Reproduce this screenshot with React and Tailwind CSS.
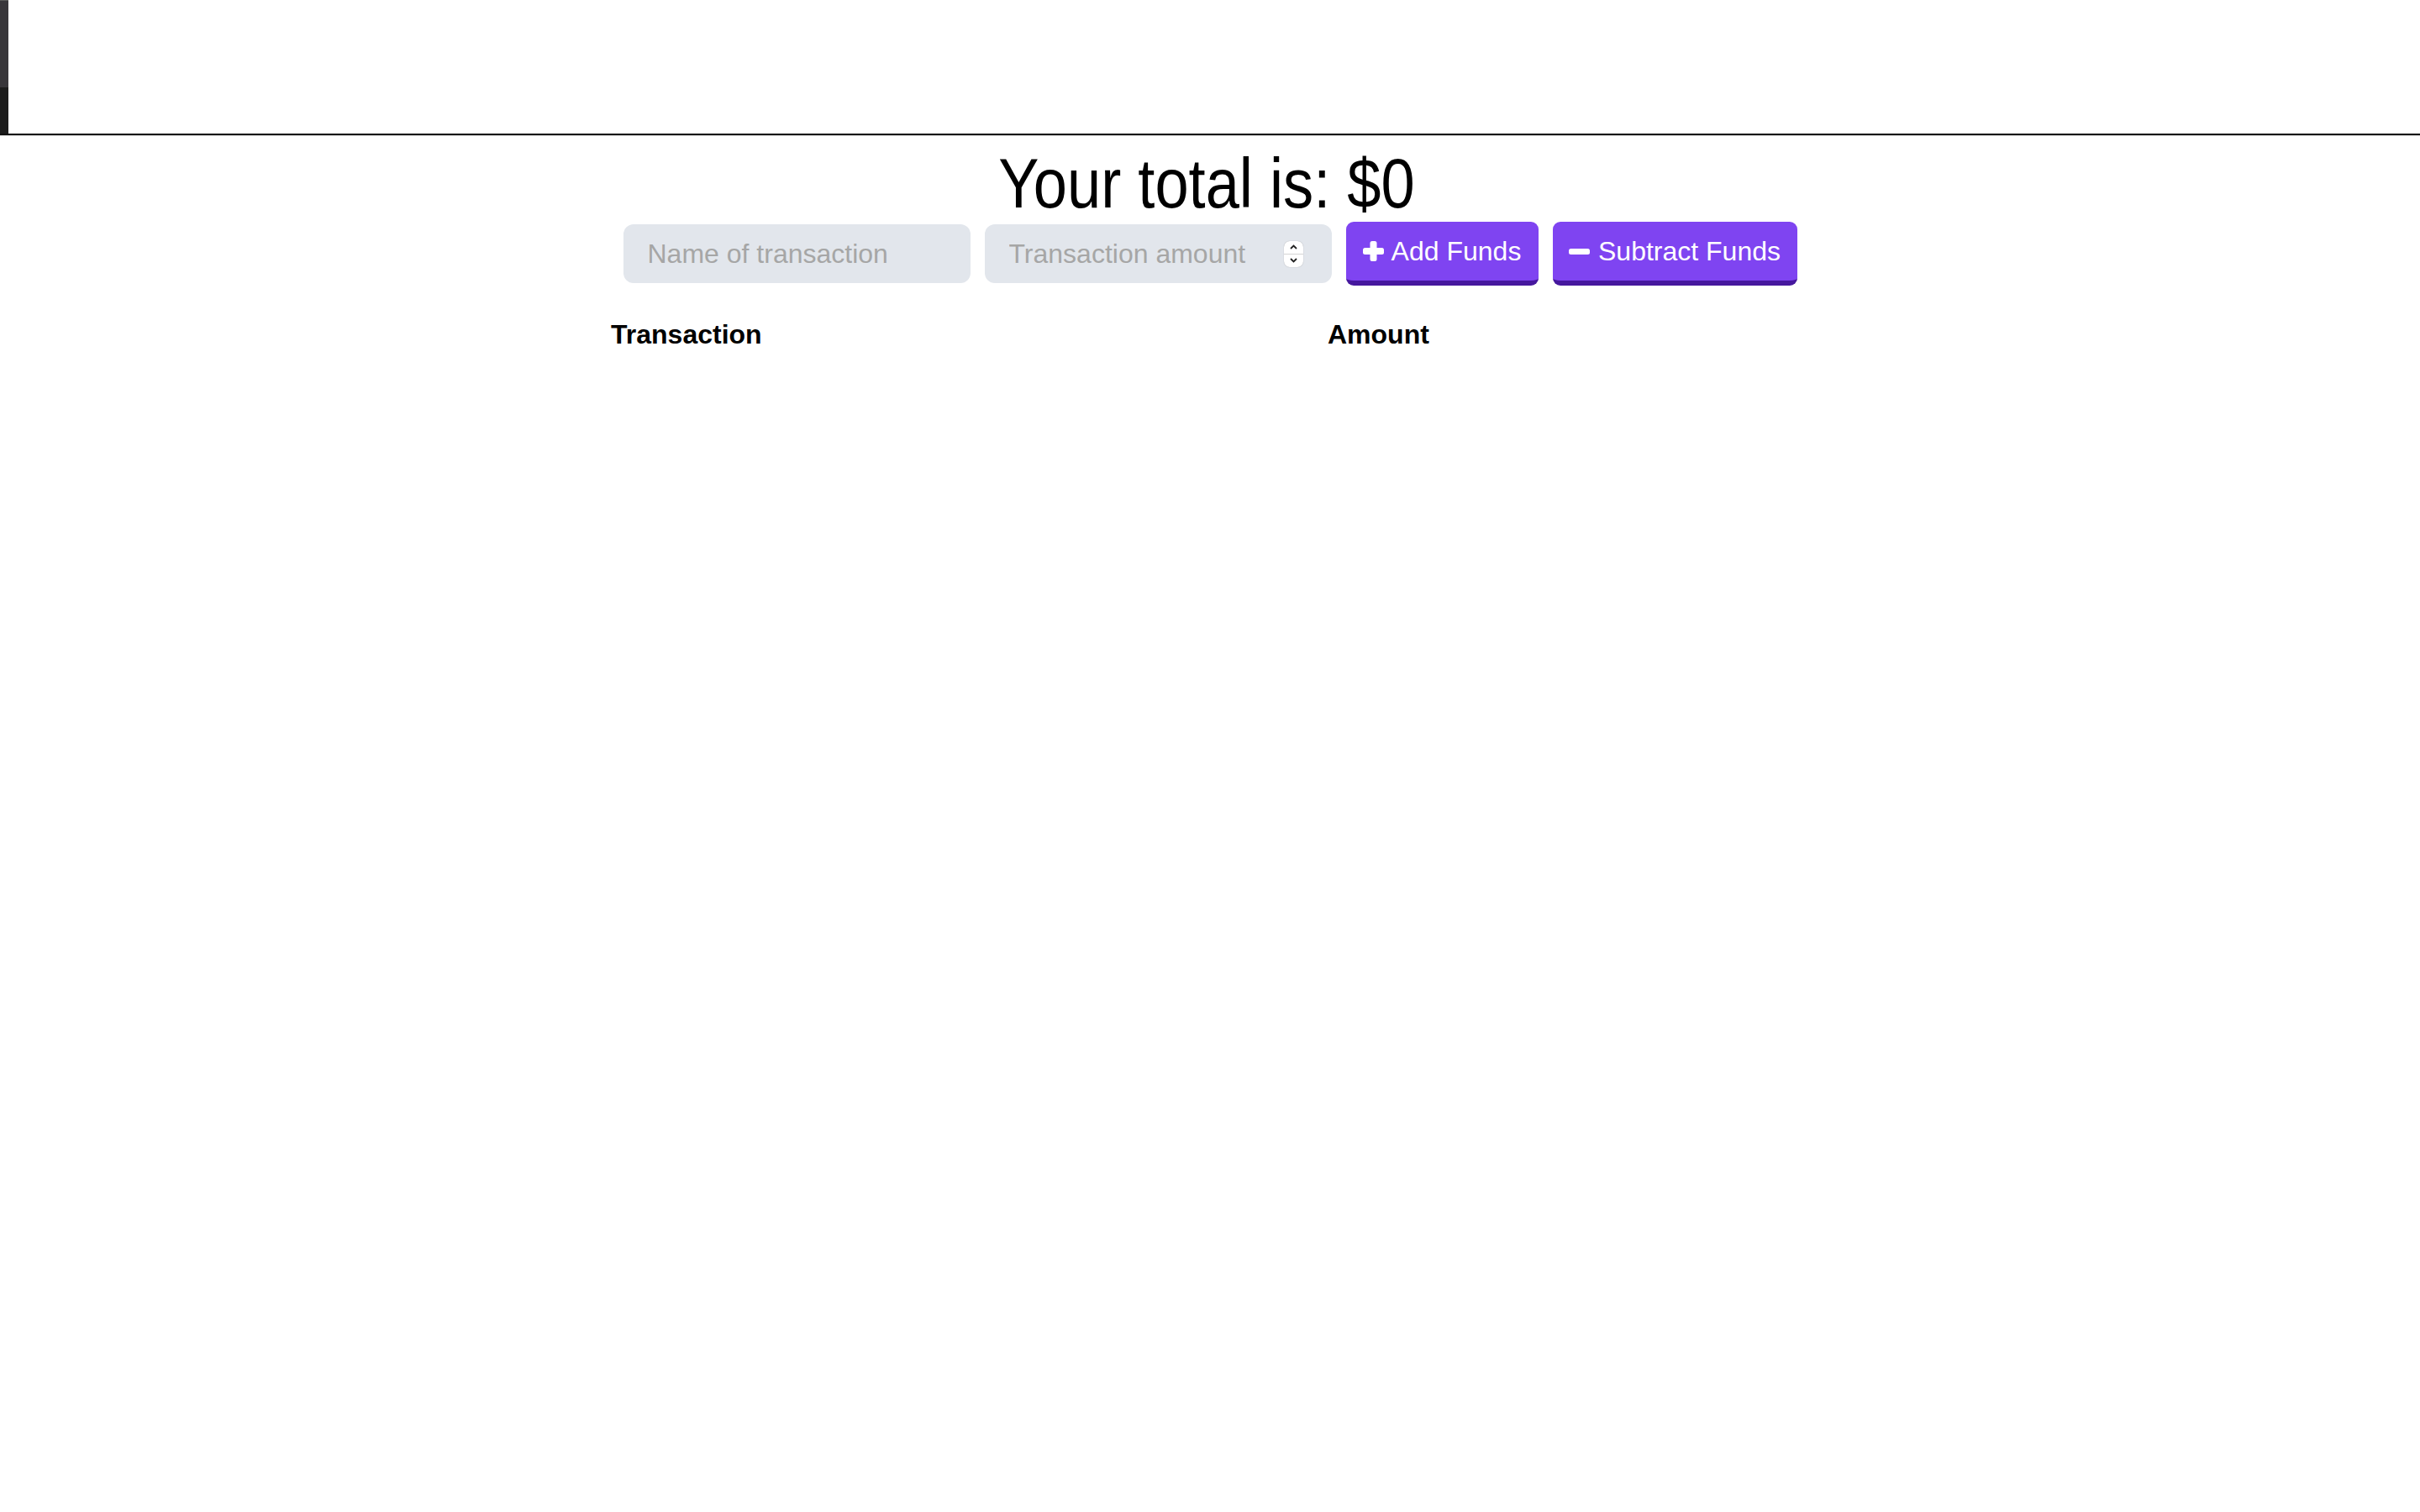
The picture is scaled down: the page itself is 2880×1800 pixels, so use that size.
import { useState } from "react";

// plus / minus glyphs as drawn in the buttons
function PlusIcon() {
    return (
        <svg width="25" height="24" viewBox="0 0 25 24" fill="white">
            <rect x="0" y="8" width="25" height="8" rx="2.5" />
            <rect x="8.5" y="0" width="8" height="24" rx="2.5" />
        </svg>
    );
}

function MinusIcon() {
    return (
        <svg width="25" height="7" viewBox="0 0 25 7" fill="white">
            <rect x="0" y="0" width="25" height="7" rx="2.5" />
        </svg>
    );
}

function Spinner() {
    return (
        <div className="w-[23px] h-[31px] bg-white rounded-[7px] shadow-[0_0_1px_rgba(0,0,0,0.35)] flex flex-col shrink-0">
            <div className="flex-1 flex items-center justify-center border-b border-[#d4d4d4]">
                <svg width="9" height="6" viewBox="0 0 9 6" fill="none" stroke="#222" strokeWidth="1.8">
                    <path d="M1 5 L4.5 1.5 L8 5" />
                </svg>
            </div>
            <div className="flex-1 flex items-center justify-center">
                <svg width="9" height="6" viewBox="0 0 9 6" fill="none" stroke="#222" strokeWidth="1.8">
                    <path d="M1 1 L4.5 4.5 L8 1" />
                </svg>
            </div>
        </div>
    );
}

export default function App() {
    const [name, setName] = useState("");
    const [amount, setAmount] = useState("");
    const [transactions, setTransactions] = useState([]);

    const total = transactions.reduce((sum, t) => sum + t.amount, 0);

    const addTx = (sign) => {
        const value = parseFloat(amount);
        if (!name || isNaN(value)) return;
        setTransactions([...transactions, { name, amount: sign * value }]);
        setName("");
        setAmount("");
    };

    return (
        <div className="min-h-screen bg-white text-black font-['Liberation_Sans',Arial,sans-serif]">
            {/* ── Top strip ── */}
            <div className="h-[161px] flex border-b-2 border-[#111]">
                <div className="w-[10px] flex flex-col">
                    <div className="h-[104px] bg-[#38363a] border-t border-[#5a5a5a]" />
                    <div className="flex-1 bg-[#1c1c1c]" />
                </div>
            </div>
            <div className="h-px bg-[#d6d6d6]" />

            {/* ── Total ── condensed title face */}
            <h1 className="mt-[13px] text-center text-[84px] leading-[86px]">
                <span className="inline-block scale-x-[0.86] translate-x-[-4px]">
                    Your total is: ${total}
                </span>
            </h1>

            {/* ── Form row ── */}
            <div className="mt-[3px] flex items-center justify-center gap-[17px]">
                <input
                    type="text"
                    value={name}
                    onChange={(e) => setName(e.target.value)}
                    placeholder="Name of transaction"
                    className="w-[413px] h-[70px] rounded-[12px] bg-[#e2e6ec] pl-[29px] text-[32px] outline-none placeholder:text-[#a6a6a6]"
                />
                <div className="w-[413px] h-[70px] rounded-[12px] bg-[#e2e6ec] flex items-center pl-[29px] pr-[34px]">
                    <input
                        type="text"
                        value={amount}
                        onChange={(e) => setAmount(e.target.value)}
                        placeholder="Transaction amount"
                        className="flex-1 min-w-0 bg-transparent text-[32px] outline-none placeholder:text-[#a6a6a6]"
                    />
                    <Spinner />
                </div>
                <button
                    onClick={() => addTx(1)}
                    className="w-[229px] h-[76px] rounded-[9px] bg-[#7f44f1] border-b-[6px] border-[#46189e] text-white text-[32px] flex items-center justify-center gap-[9px]"
                >
                    <PlusIcon />
                    <span>Add Funds</span>
                </button>
                <button
                    onClick={() => addTx(-1)}
                    className="w-[291px] h-[76px] rounded-[9px] bg-[#7f44f1] border-b-[6px] border-[#46189e] text-white text-[32px] flex items-center justify-center gap-[10px]"
                >
                    <MinusIcon />
                    <span>Subtract Funds</span>
                </button>
            </div>

            {/* ── Transactions table ── */}
            <div className="mt-[32px] mx-auto w-[1440px]">
                <div className="grid grid-cols-[852px_588px] text-[32px] font-bold leading-[37px]">
                    <div className="py-[8px] pl-[7px]">Transaction</div>
                    <div className="py-[8px] pl-[8px]">Amount</div>
                </div>
                {transactions.map((t, i) => (
                    <div key={i} className="grid grid-cols-[852px_588px] text-[32px] leading-[37px]">
                        <div className="py-[8px] pl-[7px]">{t.name}</div>
                        <div className="py-[8px] pl-[8px]">{t.amount}</div>
                    </div>
                ))}
            </div>
        </div>
    );
}
